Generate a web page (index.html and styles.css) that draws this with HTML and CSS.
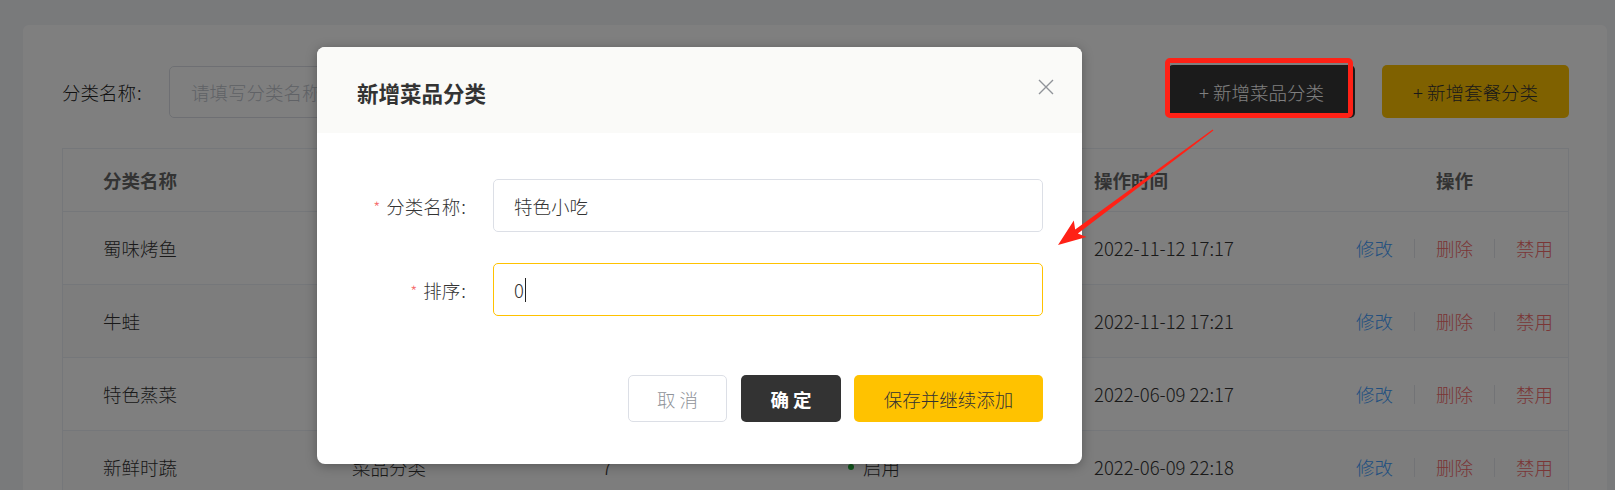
FILE: index.html
```html
<!DOCTYPE html>
<html lang="zh-CN">
<head>
<meta charset="utf-8">
<title>分类管理</title>
<link rel="stylesheet" href="styles.css">
</head>
<body>
<div class="page">
  <div class="card">
    <div class="toolbar">
      <span class="filter-label">分类名称<span class="colon">:</span></span>
      <div class="search">请填写分类名称</div>
      <div class="spacer"></div>
      <button class="btn btn-dark">+ 新增菜品分类</button>
      <button class="btn btn-yellow">+ 新增套餐分类</button>
    </div>
    <div class="table">
      <div class="tr th">
        <div class="td">分类名称</div>
        <div class="td">分类类型</div>
        <div class="td">排序</div>
        <div class="td">状态</div>
        <div class="td">操作时间</div>
        <div class="td center">操作</div>
      </div>
      <div class="tr">
        <div class="td">蜀味烤鱼</div>
        <div class="td">菜品分类</div>
        <div class="td">4</div>
        <div class="td"><i class="dot"></i>启用</div>
        <div class="td">2022-11-12 17:17</div>
        <div class="td center"><span class="link blue">修改</span><span class="sep"></span><span class="link red">删除</span><span class="sep"></span><span class="link red">禁用</span></div>
      </div>
      <div class="tr stripe">
        <div class="td">牛蛙</div>
        <div class="td">菜品分类</div>
        <div class="td">5</div>
        <div class="td"><i class="dot"></i>启用</div>
        <div class="td">2022-11-12 17:21</div>
        <div class="td center"><span class="link blue">修改</span><span class="sep"></span><span class="link red">删除</span><span class="sep"></span><span class="link red">禁用</span></div>
      </div>
      <div class="tr">
        <div class="td">特色蒸菜</div>
        <div class="td">菜品分类</div>
        <div class="td">6</div>
        <div class="td"><i class="dot"></i>启用</div>
        <div class="td">2022-06-09 22:17</div>
        <div class="td center"><span class="link blue">修改</span><span class="sep"></span><span class="link red">删除</span><span class="sep"></span><span class="link red">禁用</span></div>
      </div>
      <div class="tr stripe">
        <div class="td">新鲜时蔬</div>
        <div class="td">菜品分类</div>
        <div class="td">7</div>
        <div class="td"><i class="dot"></i>启用</div>
        <div class="td">2022-06-09 22:18</div>
        <div class="td center"><span class="link blue">修改</span><span class="sep"></span><span class="link red">删除</span><span class="sep"></span><span class="link red">禁用</span></div>
      </div>
    </div>
  </div>
</div>

<div class="mask"></div>

<div class="dialog">
  <div class="dlg-header">
    <span class="dlg-title">新增菜品分类</span>
    <svg class="dlg-close" width="16" height="16" viewBox="0 0 16 16"><path d="M1 1L15 15M15 1L1 15" stroke="#909399" stroke-width="1.4" fill="none"/></svg>
  </div>
  <div class="dlg-body">
    <div class="form-row">
      <label class="form-label"><span class="req">*</span>分类名称<span class="colon">:</span></label>
      <div class="form-input">特色小吃</div>
    </div>
    <div class="form-row">
      <label class="form-label"><span class="req">*</span>排序<span class="colon">:</span></label>
      <div class="form-input focus">0<span class="caret"></span></div>
    </div>
  </div>
  <div class="dlg-footer">
    <button class="fbtn fbtn-cancel">取 消</button>
    <button class="fbtn fbtn-ok">确 定</button>
    <button class="fbtn fbtn-save">保存并继续添加</button>
  </div>
</div>

<div class="annot-box"></div>
<svg class="annot-arrow" width="1615" height="490" viewBox="0 0 1615 490">
  <polygon fill="#ff2116" points="1213.4,130.5 1077.8,233.6 1086.5,237 1058,245 1073.8,220.6 1075.2,229.6 1212.6,129.5"/>
</svg>
</body>
</html>
```

FILE: styles.css
```css
* { box-sizing: border-box; }

html, body {
  margin: 0;
  padding: 0;
}

body {
  width: 1615px;
  height: 490px;
  overflow: hidden;
  position: relative;
  background: #f3f4f7;
  font-family: "Noto Sans CJK SC", "Noto Sans", sans-serif;
  font-size: 18.5px;
  font-weight: 300;
  color: #333;
}

.page {
  height: 490px;
  overflow: hidden;
  padding: 25px 8px 0 23px;
}

.card {
  width: 1584px;
  height: 465px;
  overflow: hidden;
  background: #fff;
  border-radius: 6px 6px 0 0;
  padding: 40px 38px 0 39px;
}

.toolbar {
  display: flex;
  align-items: center;
  height: 53px;
}

.filter-label {
  width: 107px;
  color: #222;
}

.colon {
  margin-left: 1px;
}

.search {
  width: 333px;
  height: 52px;
  border: 1px solid #dcdfe6;
  border-radius: 5px;
  padding-left: 21px;
  display: flex;
  align-items: center;
  color: #c0c4cc;
}

.spacer { flex: 1; }

.btn {
  font-family: inherit;
  font-size: 18.5px;
  font-weight: 300;
  width: 187px;
  height: 53px;
  border: none;
  border-radius: 5px;
  padding: 0;
}

.btn-dark {
  background: #363636;
  color: #fff;
}

.btn-yellow {
  background: #ffc200;
  color: #333;
  margin-left: 27px;
}

.table {
  margin-top: 30px;
  border: 1px solid #ebeef5;
  border-bottom: none;
}

.tr {
  display: grid;
  grid-template-columns: 249px 250px 246px 246px 287px 1fr;
  height: 73px;
  border-bottom: 1px solid #ebeef5;
  align-items: center;
}

.tr.th {
  height: 63px;
  font-weight: 700;
  color: #666;
}

.tr.stripe { background: #fafafa; }

.td {
  padding-left: 40px;
  display: flex;
  align-items: center;
}

.td.center {
  padding-left: 0;
  justify-content: center;
}

.dot {
  width: 6px;
  height: 6px;
  border-radius: 50%;
  background: #22ac38;
  margin-right: 9px;
}

.link.blue { color: #419eff; }
.link.red { color: #f56c6c; }

.sep {
  width: 1px;
  height: 19px;
  background: #e4e7ed;
  margin: 0 21px;
}

.mask {
  position: absolute;
  inset: 0;
  background: rgba(0, 0, 0, 0.5);
}

.dialog {
  position: absolute;
  left: 317px;
  top: 47px;
  width: 765px;
  height: 417px;
  background: #fff;
  border-radius: 8px;
  overflow: hidden;
  box-shadow: 0 2px 12px rgba(0, 0, 0, 0.3);
}

.dlg-header {
  position: relative;
  height: 86px;
  background: #fafaf8;
  padding: 31px 0 0 40px;
}

.dlg-title {
  display: block;
  font-size: 21.5px;
  font-weight: 700;
  line-height: 30px;
  color: #333;
}

.dlg-close {
  position: absolute;
  left: 721px;
  top: 32px;
  width: 16px;
  height: 16px;
}

.dlg-body {
  padding-top: 46px;
}

.form-row {
  display: flex;
  align-items: center;
  height: 53px;
  margin-bottom: 31px;
}

.form-row:last-child { margin-bottom: 0; }

.form-label {
  width: 176px;
  text-align: right;
  padding-right: 27px;
  color: #333;
}

.req {
  color: #f56c6c;
  font-size: 16px;
  margin-right: 6px;
}

.form-input {
  width: 550px;
  height: 53px;
  border: 1px solid #dcdfe6;
  border-radius: 5px;
  padding-left: 20px;
  display: flex;
  align-items: center;
  color: #333;
}

.form-input.focus { border-color: #ffc200; }

.caret {
  width: 1px;
  height: 24px;
  background: #222;
  margin-left: 1px;
}

.dlg-footer {
  display: flex;
  justify-content: flex-end;
  padding: 59px 39px 0 0;
}

.fbtn {
  font-family: inherit;
  font-size: 18.5px;
  font-weight: 300;
  height: 47px;
  border-radius: 5px;
  padding: 0;
  border: 1px solid transparent;
}

.fbtn-cancel {
  width: 99px;
  background: #fff;
  border-color: #dcdfe6;
  color: #909399;
}

.fbtn-ok {
  width: 100px;
  margin-left: 14px;
  background: #333;
  color: #fff;
  font-weight: 700;
}

.fbtn-save {
  width: 189px;
  margin-left: 13px;
  background: #ffc200;
  color: #333;
}

.annot-box {
  position: absolute;
  left: 1165px;
  top: 58px;
  width: 188px;
  height: 60px;
  border: 5px solid #ff2116;
  border-radius: 5px;
}

.annot-arrow {
  position: absolute;
  left: 0;
  top: 0;
}
```
